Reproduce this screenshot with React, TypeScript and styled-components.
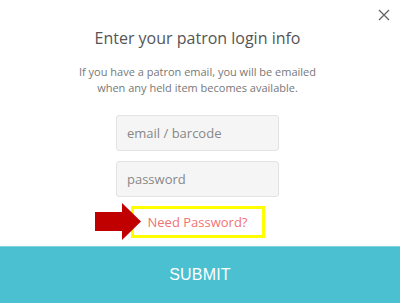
import React, { useState } from "react";
import styled, { createGlobalStyle } from "styled-components";

const GlobalStyle = createGlobalStyle`
  html, body {
    margin: 0;
    padding: 0;
    background: #ffffff;
  }
  * {
    box-sizing: border-box;
  }
`;

const Modal = styled.div`
  position: relative;
  width: 400px;
  height: 303px;
  background: #ffffff;
  display: flex;
  flex-direction: column;
  font-family: "Open Sans", "Noto Sans", sans-serif;
  overflow: hidden;
`;

const CloseButton = styled.button`
  position: absolute;
  top: 8px;
  right: 9px;
  width: 14px;
  height: 14px;
  padding: 0;
  border: none;
  background: none;
  cursor: pointer;
  display: flex;
  align-items: center;
  justify-content: center;
`;

const Body = styled.div`
  flex: 1;
  display: flex;
  flex-direction: column;
  align-items: center;
  padding: 26px 5px 0 0;
`;

const Title = styled.h2`
  margin: 0;
  font-size: 16px;
  line-height: 24px;
  font-weight: 400;
  color: #555555;
`;

const Subtitle = styled.p`
  margin: 14px 0 0;
  font-size: 11px;
  line-height: 16px;
  color: #777777;
  text-align: center;
`;

const Form = styled.form`
  display: flex;
  flex-direction: column;
  align-items: center;
  gap: 10px;
  margin-top: 19px;
`;

const Input = styled.input`
  width: 163px;
  height: 36px;
  padding: 0 10px;
  border: 1px solid #e3e3e3;
  border-radius: 3px;
  background: #f5f5f5;
  font-family: "Open Sans", "Noto Sans", sans-serif;
  font-size: 13px;
  color: #555555;
  &::placeholder {
    color: #888888;
  }
  &:focus {
    outline: none;
  }
`;

const LinkBox = styled.div`
  position: relative;
  width: 134px;
  height: 32px;
  margin-top: 9px;
  border: 3px solid #ffff00;
  display: flex;
  align-items: center;
  justify-content: center;
`;

const NeedPassword = styled.a`
  font-size: 13px;
  color: #f07474;
  text-decoration: none;
  cursor: pointer;
`;

const Arrow = styled.svg`
  position: absolute;
  left: -39px;
  top: -6px;
`;

const Submit = styled.button`
  height: 57px;
  margin-top: 8px;
  border: none;
  border-top: 1px solid #7fd3de;
  background: #4bc0d0;
  color: #ffffff;
  font-family: "Liberation Sans", Arial, sans-serif;
  font-size: 16px;
  letter-spacing: 0.2px;
  cursor: pointer;
`;

const App = () => {
  const [login, setLogin] = useState("");
  const [password, setPassword] = useState("");

  const handleSubmit = (e: React.FormEvent) => {
    e.preventDefault();
  };

  return (
    <>
      <GlobalStyle />
      <Modal>
        <CloseButton aria-label="close">
          <svg width="12" height="12" viewBox="0 0 12 12">
            <path
              d="M1 1 L11 11 M11 1 L1 11"
              stroke="#666666"
              strokeWidth="1.4"
              fill="none"
            />
          </svg>
        </CloseButton>
        <Body>
          <Title>Enter your patron login info</Title>
          <Subtitle>
            If you have a patron email, you will be emailed
            <br />
            when any held item becomes available.
          </Subtitle>
          <Form onSubmit={handleSubmit}>
            <Input
              type="text"
              placeholder="email / barcode"
              value={login}
              onChange={(e) => setLogin(e.target.value)}
            />
            <Input
              type="password"
              placeholder="password"
              value={password}
              onChange={(e) => setPassword(e.target.value)}
            />
          </Form>
          <LinkBox>
            <Arrow width="46" height="37" viewBox="0 0 46 37">
              <polygon
                points="0,9 27,9 27,0 46,18.5 27,37 27,28 0,28"
                fill="#c00000"
              />
            </Arrow>
            <NeedPassword>Need Password?</NeedPassword>
          </LinkBox>
        </Body>
        <Submit type="submit">SUBMIT</Submit>
      </Modal>
    </>
  );
};

export default App;
